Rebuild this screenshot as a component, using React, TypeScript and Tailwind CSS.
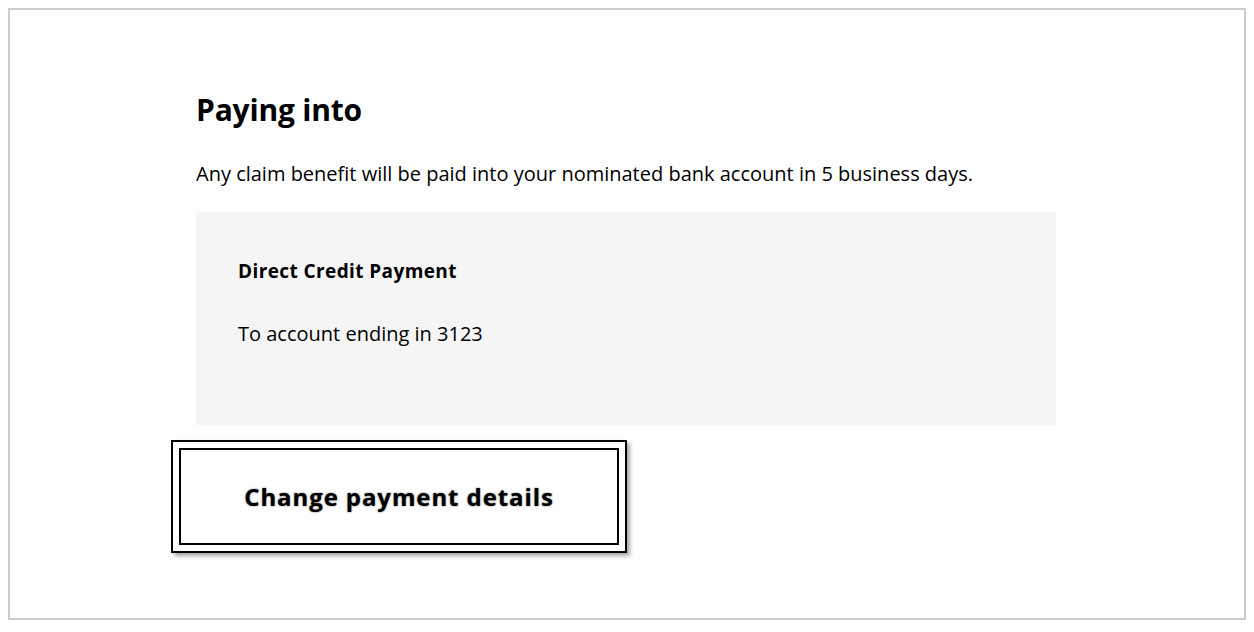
export default function App() {
  return (
    <div className="w-[1254px] h-[632px] bg-white p-2" style={{ fontFamily: '"Open Sans", "Liberation Sans", sans-serif' }}>
      <div className="h-[612px] border-2 border-[#cccccc] pl-[186px] pt-[80px]">
        <h1 className="text-[30px] font-bold leading-[40px] tracking-[-0.2px] text-black">Paying into</h1>
        <p className="mt-[30px] text-[20px] leading-[28px] text-black">
          Any claim benefit will be paid into your nominated bank account in 5 business days.
        </p>
        <div className="mt-[24px] w-[860px] h-[213px] bg-[#f5f5f5] px-[42px] pt-[46px]">
          <h2 className="text-[19px] font-bold leading-[26px] tracking-[0.4px] text-black">Direct Credit Payment</h2>
          <p className="mt-[37px] text-[20px] leading-[26px] text-black">To account ending in 3123</p>
        </div>
        <div className="mt-[15px] -ml-[25px] w-[456px] h-[113px] border-2 border-black bg-white p-[6px] shadow-[3px_3px_4px_rgba(0,0,0,0.35)]">
          <button className="w-full h-full border-2 border-black bg-white text-[24px] font-bold tracking-[0.9px] text-black [text-shadow:0_0_2px_rgba(0,0,0,0.6)]">
            Change payment details
          </button>
        </div>
      </div>
    </div>
  );
}
